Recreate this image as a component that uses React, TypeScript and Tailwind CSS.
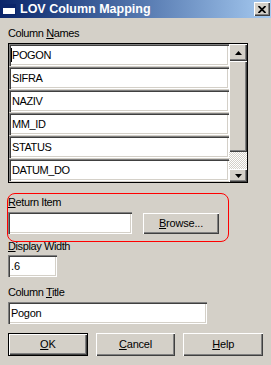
import React from "react";

const sunken =
  "bg-white shadow-[inset_1px_1px_0_#808080,inset_2px_2px_0_#404040,inset_-1px_-1px_0_#ffffff,inset_-2px_-2px_0_#d4d0c8]";
const raised =
  "bg-[#d4d0c8] shadow-[inset_1px_1px_0_#ffffff,inset_-1px_-1px_0_#404040,inset_-2px_-2px_0_#808080]";

const columns = ["POGON", "SIFRA", "NAZIV", "MM_ID", "STATUS", "DATUM_DO"];

function Label({ pre = "", u, post }: { pre?: string; u: string; post: string }) {
  return (
    <div className="h-[13px] leading-[13px] text-[11px] tracking-[-0.4px] text-black">
      {pre}
      <span className="underline underline-offset-[1px]">{u}</span>
      {post}
    </div>
  );
}

function Arrow({ up }: { up?: boolean }) {
  return (
    <svg width="7" height="4" viewBox="0 0 7 4">
      <path d={up ? "M3.5 0 L7 4 L0 4 Z" : "M0 0 L7 0 L3.5 4 Z"} fill="#000" />
    </svg>
  );
}

function Button({ u, post, isDefault }: { u: string; post: string; isDefault?: boolean }) {
  return (
    <div className={`w-[80px] h-[23px] ${isDefault ? "border border-black" : ""}`}>
      <div className={`${raised} w-full h-full flex items-center justify-center text-[11px] tracking-[-0.2px]`}>
        <span className="underline underline-offset-[1px]">{u}</span>
        {post}
      </div>
    </div>
  );
}

export default function App() {
  return (
    <div
      className="w-[271px] h-[365px] bg-[#d4d0c8] overflow-hidden text-black"
      style={{ fontFamily: '"Liberation Sans", Arial, sans-serif' }}
    >
      {/* Title bar */}
      <div className="h-[18px] bg-linear-to-r from-[#0a246a] to-[#a6caf0] flex items-center pl-[2px] pr-[1px]">
        <div className="w-[14px] h-[11px] bg-white border border-[#0a246a] flex flex-col">
          <div className="h-[3px] bg-[#0a246a]" />
        </div>
        <div className="ml-[4px] text-white font-bold text-[12.5px] leading-none">LOV Column Mapping</div>
        <div className={`${raised} ml-auto w-[16px] h-[14px] flex items-center justify-center`}>
          <svg width="8" height="7" viewBox="0 0 8 7">
            <path d="M0.5 0 L7.5 7 M7.5 0 L0.5 7" stroke="#000" strokeWidth="1.8" />
          </svg>
        </div>
      </div>

      <div className="px-[8px]">
        <div className="mt-[9px]">
          <Label pre="Column " u="N" post="ames" />
        </div>

        {/* Column list */}
        <div className="mt-[3px] w-[240px] h-[140px] border border-black bg-[#d4d0c8] flex">
          <div className="w-[220px] flex flex-col">
            {columns.map((c) => (
              <div
                key={c}
                className={`${sunken} h-[22px] mb-px flex items-center pl-[3px] text-[11px] tracking-[-0.4px]`}
              >
                {c === "POGON" && <span className="w-px h-[14px] bg-black -ml-px" />}
                {c}
              </div>
            ))}
          </div>
          <div className="flex-1 flex flex-col">
            <div className={`${raised} h-[17px] flex items-center justify-center`}>
              <Arrow up />
            </div>
            <div className={`${raised} h-[91px]`} />
            <div className="flex-1 bg-[repeating-conic-gradient(#ffffff_0_25%,#d4d0c8_0_50%)] bg-[length:2px_2px]" />
            <div className={`${raised} h-[13px] flex items-center justify-center`}>
              <Arrow />
            </div>
          </div>
        </div>

        {/* Return item */}
        <div className="mt-[10px] -ml-px w-[222px] h-[49px] border border-[#ff0000] rounded-[8px] pt-[2px]">
          <Label u="R" post="eturn Item" />
          <div className="mt-[3px] flex items-start">
            <div className={`${sunken} w-[124px] h-[22px]`} />
            <div className="ml-[11px] mt-px w-[76px] h-[21px]">
              <div className={`${raised} w-full h-full flex items-center justify-center text-[11px] tracking-[-0.2px]`}>
                <span className="underline underline-offset-[1px]">B</span>rowse...
              </div>
            </div>
          </div>
        </div>

        <div className="-mt-[2px]">
          <Label u="D" post="isplay Width" />
        </div>
        <div className={`${sunken} mt-[2px] w-[49px] h-[22px] flex items-center pl-[3px] text-[11px]`}>.6</div>

        <div className="mt-[9px]">
          <Label pre="Column " u="T" post="itle" />
        </div>
        <div className={`${sunken} mt-[3px] w-[199px] h-[22px] flex items-center pl-[3px] text-[11px] tracking-[-0.3px]`}>
          Pogon
        </div>

        <div className="mt-[9px] flex gap-[8px]">
          <Button u="O" post="K" isDefault />
          <Button u="C" post="ancel" />
          <Button u="H" post="elp" />
        </div>
      </div>
    </div>
  );
}
